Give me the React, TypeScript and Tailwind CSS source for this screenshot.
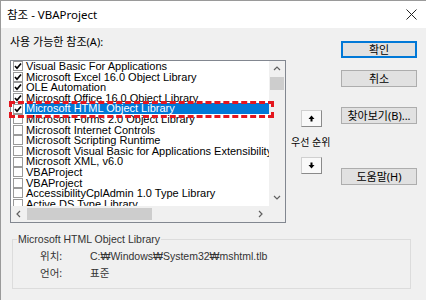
import React from 'react'

const references: { name: string; checked: boolean; selected?: boolean }[] = [
    { name: 'Visual Basic For Applications', checked: true },
    { name: 'Microsoft Excel 16.0 Object Library', checked: true },
    { name: 'OLE Automation', checked: true },
    { name: 'Microsoft Office 16.0 Object Library', checked: true },
    { name: 'Microsoft HTML Object Library', checked: true, selected: true },
    { name: 'Microsoft Forms 2.0 Object Library', checked: false },
    { name: 'Microsoft Internet Controls', checked: false },
    { name: 'Microsoft Scripting Runtime', checked: false },
    { name: 'Microsoft Visual Basic for Applications Extensibility 5.3', checked: false },
    { name: 'Microsoft XML, v6.0', checked: false },
    { name: 'VBAProject', checked: false },
    { name: 'VBAProject', checked: false },
    { name: 'AccessibilityCplAdmin 1.0 Type Library', checked: false },
    { name: 'Active DS Type Library', checked: false },
]

const ko = "font-['Noto_Sans','Noto_Sans_CJK_KR',sans-serif]"

function Chevron({ dir }: { dir: 'up' | 'down' | 'left' | 'right' }) {
    const pts = {
        up: '1,5 4,2 7,5',
        down: '1,2 4,5 7,2',
        left: '5,1 2,4 5,7',
        right: '2,1 5,4 2,7',
    }[dir]
    return (
        <svg width="8" height="8" viewBox="0 0 8 8">
            <polyline points={pts} fill="none" stroke="#606060" strokeWidth="1.2" />
        </svg>
    )
}

function CheckBox({ checked }: { checked: boolean }) {
    return (
        <span className="w-[10px] h-[10px] shrink-0 border border-[#9a9a9a] bg-white flex items-center justify-center">
            {checked ? (
                <svg width="8" height="8" viewBox="0 0 8 8">
                    <polyline points="1,4 3,6.2 7,1.5" fill="none" stroke="#000" strokeWidth="1.7" />
                </svg>
            ) : null}
        </span>
    )
}

function Button({ children, primary }: { children: React.ReactNode; primary?: boolean }) {
    return (
        <button className={primary
            ? `w-full h-[17px] bg-[#e1e1e1] border-2 border-[#0078d7] text-[11px] leading-none text-black ${ko}`
            : `w-full h-[17px] bg-[#e1e1e1] border border-[#adadad] text-[11px] leading-none text-black ${ko}`}>
            {children}
        </button>
    )
}

function ArrowButton({ up }: { up?: boolean }) {
    return (
        <button className="w-[21px] h-[17px] bg-[#f9f9f9] border border-[#d0d0d0] border-r-[#8a8a8a] border-b-[#8a8a8a] flex items-center justify-center">
            <svg width="7" height="7" viewBox="0 0 7 7">
                {up
                    ? <polygon points="3.5,0.5 6.5,4 4.5,4 4.5,6.5 2.5,6.5 2.5,4 0.5,4" fill="#000" />
                    : <polygon points="3.5,6.5 6.5,3 4.5,3 4.5,0.5 2.5,0.5 2.5,3 0.5,3" fill="#000" />}
            </svg>
        </button>
    )
}

export default function App() {
    return (
        <div className="w-[426px] h-[300px] bg-[#f0f0f0] border-t border-l border-[#9a9a9a] overflow-hidden relative">
            {/* title bar */}
            <div className="h-[27px] bg-white flex items-center justify-between pl-[6px] pr-[9px]">
                <span className={`text-[11.5px] text-black ${ko}`}>참조 - VBAProject</span>
                <svg width="11" height="11" viewBox="0 0 11 11">
                    <path d="M0.5 0.5 L10.5 10.5 M10.5 0.5 L0.5 10.5" stroke="#222" strokeWidth="1" />
                </svg>
            </div>

            <div className="flex">
                {/* references list */}
                <div className="ml-[9px] w-[276px] pt-[7px]">
                    <div className={`h-[14px] leading-[14px] text-[11px] text-black ${ko}`}>사용 가능한 참조(A):</div>
                    <div className="mt-[11px] w-[276px] h-[163px] border border-[#828790] bg-white grid grid-cols-[258px_16px] grid-rows-[145px_16px]">
                        <div className="overflow-hidden font-['Liberation_Sans',sans-serif] text-[11px]">
                            {references.map((r, i) => (
                                <div key={i} className="flex items-center h-[10.6px] whitespace-nowrap">
                                    <span className="ml-[2px]"><CheckBox checked={r.checked} /></span>
                                    {r.selected ? (
                                        <span className="ml-[2px] flex-1 h-full bg-[#0078d7] text-white leading-[10.6px] pl-[1px]">{r.name}</span>
                                    ) : (
                                        <span className="ml-[2px] text-black leading-[10.6px] pl-[1px]">{r.name}</span>
                                    )}
                                </div>
                            ))}
                        </div>
                        <div className="bg-[#f0f0f0] flex flex-col">
                            <div className="h-[16px] flex items-center justify-center"><Chevron dir="up" /></div>
                            <div className="h-[13px] mx-[1px] bg-[#cdcdcd]"></div>
                            <div className="flex-1"></div>
                            <div className="h-[16px] flex items-center justify-center"><Chevron dir="down" /></div>
                        </div>
                        <div className="bg-[#f0f0f0] flex items-center">
                            <div className="w-[16px] flex items-center justify-center"><Chevron dir="left" /></div>
                            <div className="w-[125px] h-[12px] bg-[#cdcdcd]"></div>
                            <div className="flex-1"></div>
                            <div className="w-[16px] flex items-center justify-center"><Chevron dir="right" /></div>
                        </div>
                        <div className="bg-[#f0f0f0]"></div>
                    </div>
                </div>

                {/* priority */}
                <div className="ml-[5px] w-[50px] flex flex-col">
                    <div className="mt-[82px] ml-[10px]"><ArrowButton up /></div>
                    <div className={`mt-[9px] h-[13px] leading-[13px] text-[10px] text-black ${ko}`}>우선 순위</div>
                    <div className="mt-[8px] ml-[10px]"><ArrowButton /></div>
                </div>

                {/* buttons */}
                <div className="w-[76px] flex flex-col">
                    <div className="mt-[8px]"><Button primary>확인</Button></div>
                    <div className="mt-[5px]"><Button>취소</Button></div>
                    <div className="mt-[13px]"><Button>찾아보기(B)...</Button></div>
                    <div className="mt-[37px]"><Button>도움말(H)</Button></div>
                </div>
            </div>

            {/* details */}
            <fieldset className={`mt-[10px] ml-[11px] w-[399px] border border-[#dcdcdc] pb-[6px] text-[10.5px] text-[#333] ${ko}`}>
                <legend className="ml-[4px] px-[1px] leading-[12px] font-['Liberation_Sans','Noto_Sans_CJK_KR',sans-serif]">Microsoft HTML Object Library</legend>
                <div className="mt-[3px] flex h-[17px] items-center">
                    <span className="ml-[27px] w-[50px]">위치:</span>
                    <span className="font-['Liberation_Sans','Noto_Sans_CJK_KR',sans-serif]">C:₩Windows₩System32₩mshtml.tlb</span>
                </div>
                <div className="flex h-[17px] items-center">
                    <span className="ml-[27px] w-[50px]">언어:</span>
                    <span>표준</span>
                </div>
            </fieldset>

            {/* highlight annotation */}
            <div className="absolute left-[8px] top-[100px] w-[265px] h-[17px] border-[3px] border-dashed border-[#e4161e] pointer-events-none"></div>
        </div>
    )
}
